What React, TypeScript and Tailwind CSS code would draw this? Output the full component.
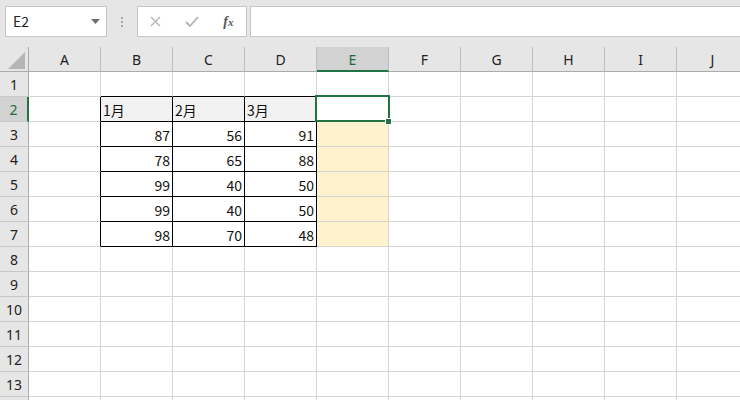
import React from "react";

const COLS = ["A", "B", "C", "D", "E", "F", "G", "H", "I", "J"];
const ROWS = Array.from({ length: 14 }, (_, i) => i + 1);

const DATA: Record<number, (string | number)[]> = {
  2: ["1月", "2月", "3月"],
  3: [87, 56, 91],
  4: [78, 65, 88],
  5: [99, 40, 50],
  6: [99, 40, 50],
  7: [98, 70, 48],
};

const cellFont = { fontFamily: '"Noto Sans CJK JP", "Noto Sans", sans-serif' };

function Cell({ row, col }: { row: number; col: number }) {
  const inTableRow = row >= 2 && row <= 7;
  const rightBlack = inTableRow && col <= 3;
  const bottomBlack = row >= 1 && row <= 7 && col >= 1 && col <= 3;
  const inTable = inTableRow && col >= 1 && col <= 3;
  const headerRow = row === 2 && inTable;
  const yellow = col === 4 && row >= 3 && row <= 7;

  let bg = "bg-white";
  if (headerRow) bg = "bg-[#f2f2f2]";
  if (yellow) bg = "bg-[#fff2cc]";

  const val = inTable ? DATA[row][col - 1] : undefined;
  const isNum = typeof val === "number";

  return (
    <div
      className={
        "w-[72px] h-[25px] shrink-0 border-r border-b flex items-center text-[14px] text-[#111] leading-none " +
        bg +
        " " +
        (rightBlack ? "border-r-black" : "border-r-[#d4d4d4]") +
        " " +
        (bottomBlack ? "border-b-black" : "border-b-[#d4d4d4]") +
        " " +
        (isNum ? "justify-end pr-[2px]" : "justify-start pl-[2px]")
      }
      style={cellFont}
    >
      {val !== undefined ? <span className="pt-[2px]">{val}</span> : null}
    </div>
  );
}

export default function App() {
  return (
    <div
      className="w-[740px] h-[400px] overflow-hidden bg-white relative"
      style={{ fontFamily: '"Noto Sans", "Liberation Sans", sans-serif' }}
    >
      {/* Top formula bar */}
      <div className="h-[47px] bg-[#e6e6e6] flex items-start pt-[6px] pl-[5px] gap-0">
        <div className="w-[102px] h-[31px] bg-white border border-[#c6c6c6] flex items-center justify-between pl-[7px] pr-[6px]">
          <span className="text-[14px] text-[#222]" style={cellFont}>
            E2
          </span>
          <svg width="9" height="5" viewBox="0 0 9 5">
            <path d="M0 0 L9 0 L4.5 5 Z" fill="#6e6e6e" />
          </svg>
        </div>
        <div className="w-[30px] h-[31px] flex flex-col items-center justify-center gap-[2px]">
          <div className="w-[2px] h-[2px] bg-[#a6a6a6]" />
          <div className="w-[2px] h-[2px] bg-[#a6a6a6]" />
          <div className="w-[2px] h-[2px] bg-[#a6a6a6]" />
        </div>
        <div className="w-[110px] h-[31px] bg-white border border-[#c6c6c6] flex items-center">
          <div className="w-[36px] flex justify-center">
            <svg width="11" height="11" viewBox="0 0 11 11">
              <path d="M1 1 L10 10 M10 1 L1 10" stroke="#b3b3b3" strokeWidth="1.3" fill="none" />
            </svg>
          </div>
          <div className="w-[38px] flex justify-center">
            <svg width="14" height="11" viewBox="0 0 14 11">
              <path d="M1 6 L5 10 L13 1" stroke="#b3b3b3" strokeWidth="1.8" fill="none" />
            </svg>
          </div>
          <div className="w-[36px] flex justify-center">
            <span
              className="text-[14px] italic text-[#555] font-bold"
              style={{ fontFamily: '"Liberation Serif", serif' }}
            >
              f<span className="text-[11px]">x</span>
            </span>
          </div>
        </div>
        <div className="ml-[3px] flex-1 h-[31px] bg-white border border-[#c6c6c6] border-r-0" />
      </div>

      {/* Grid */}
      <div className="relative">
        {/* Column header row */}
        <div className="flex h-[25px] bg-[#e6e6e6]">
          <div className="w-[29px] h-[25px] shrink-0 border-r border-b border-r-[#ababab] border-b-[#ababab] relative flex items-end justify-end pr-[3px] pb-[2px]">
            <svg width="17" height="17" viewBox="0 0 17 17">
              <path d="M17 0 L17 17 L0 17 Z" fill="#b5b5b5" />
            </svg>
          </div>
          {COLS.map((c) => (
            <div
              key={c}
              className={
                "w-[72px] h-[25px] shrink-0 border-r border-r-[#bdbdbd] flex items-center justify-center text-[14px] " +
                (c === "E"
                  ? "bg-[#d2d2d2] border-b-2 border-b-[#217346] text-[#1e6b42]"
                  : "border-b border-b-[#ababab] text-[#222]")
              }
            >
              <span className={c === "E" ? "pt-[1px]" : ""}>{c}</span>
            </div>
          ))}
        </div>

        {ROWS.map((r) => (
          <div key={r} className="flex h-[25px]">
            <div
              className={
                "w-[29px] h-[25px] shrink-0 border-b border-b-[#c8c8c8] flex items-center justify-center text-[14px] " +
                (r === 2
                  ? "bg-[#d2d2d2] border-r-2 border-r-[#217346] text-[#1e6b42]"
                  : "bg-[#e6e6e6] border-r border-r-[#ababab] text-[#222]")
              }
            >
              {r <= 13 ? r : null}
            </div>
            {COLS.map((_, ci) => (
              <Cell key={ci} row={r} col={ci} />
            ))}
          </div>
        ))}

        {/* Selection overlay for E2 */}
        <div className="absolute left-[315px] top-[48px] w-[75px] h-[27px] border-2 border-[#217346] pointer-events-none" />
        <div className="absolute left-[385px] top-[71px] w-[7px] h-[7px] bg-[#217346] border border-white pointer-events-none" />
      </div>
    </div>
  );
}
